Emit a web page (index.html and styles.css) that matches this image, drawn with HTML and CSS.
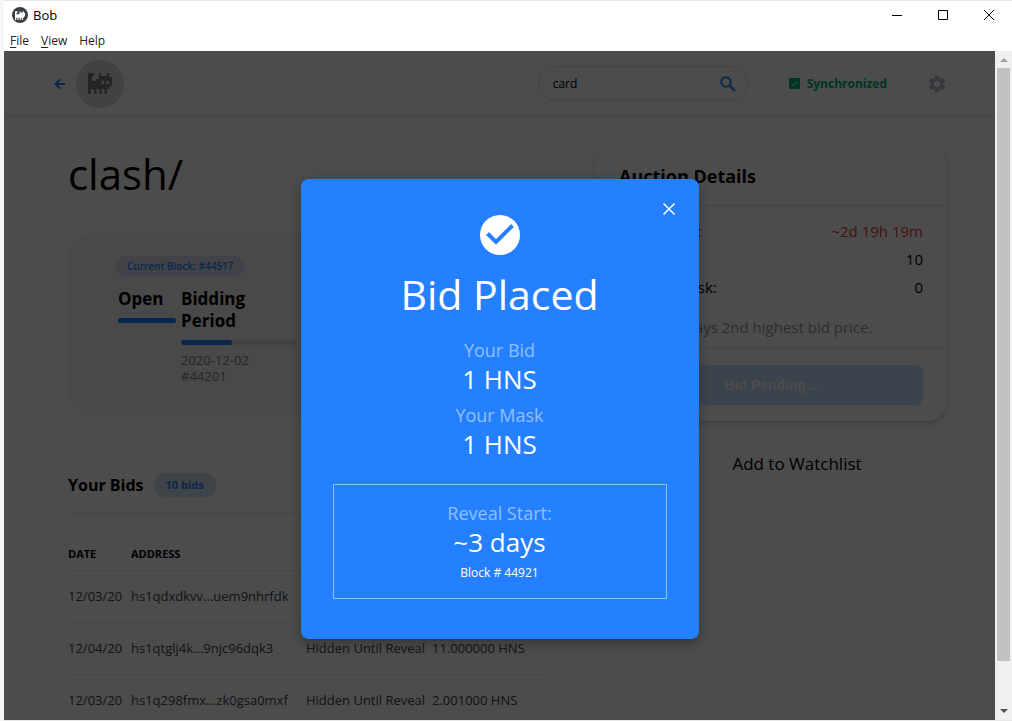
FILE: index.html
```html
<!DOCTYPE html>
<html lang="en">
<head>
<meta charset="utf-8">
<title>Bob</title>
<link rel="stylesheet" href="styles.css">
</head>
<body>
<svg class="defs" aria-hidden="true">
  <symbol id="cat" viewBox="0 0 24 21">
    <path d="M0 0h6v3H4v5h4V6h3V0h2v3h6V0h2.500v4H24v9h-2.500v3H19v5h-2.500v-5H14v5h-2.500v-5H8.500v5H6v-5H3v5H0z"/>
    <path class="eyes" d="M13.500 8h2.500v3h-2.500zM18.500 8H21v3h-2.500z"/>
  </symbol>
</svg>
<div class="window">
  <div class="titlebar">
    <span class="app-icon"><svg width="10" height="9"><use href="#cat"/></svg></span>
    <span class="app-name">Bob</span>
    <div class="window-controls">
      <button aria-label="Minimize"><svg width="10" height="10"><path d="M0 5.500h10"/></svg></button>
      <button aria-label="Maximize"><svg width="10" height="10"><path d="M.5.5h9v9h-9z"/></svg></button>
      <button aria-label="Close"><svg width="10" height="10"><path d="M0 0l10 10M10 0L0 10"/></svg></button>
    </div>
  </div>
  <nav class="menubar">
    <button><u>F</u>ile</button><button><u>V</u>iew</button><button>Help</button>
  </nav>
  <div class="viewport">
    <div class="page">
      <header class="topbar">
        <button class="back" aria-label="Back"><svg width="12" height="12" viewBox="0 0 12 12"><path d="M11 6H2M6 1.500L1.500 6 6 10.500"/></svg></button>
        <span class="logo"><svg width="24" height="21"><use href="#cat"/></svg></span>
        <div class="search">
          <input type="text" value="card" aria-label="Search names">
          <button aria-label="Search"><svg width="16" height="16" viewBox="0 0 16 16"><circle cx="6" cy="6" r="4.700"/><path d="M9.500 9.500L15 15"/></svg></button>
        </div>
        <div class="sync"><svg width="11" height="11" viewBox="0 0 11 11"><rect width="11" height="11" rx="1"/><path d="M2.500 5.500l2.200 2.200L8.700 3.500"/></svg>Synchronized</div>
        <button class="settings" aria-label="Settings"><svg width="20" height="20" viewBox="0 0 24 24"><path d="M19.430 12.980c.04-.32.07-.64.07-.98s-.03-.66-.07-.98l2.110-1.650c.19-.15.24-.42.12-.64l-2-3.460c-.12-.22-.39-.3-.61-.22l-2.490 1c-.52-.4-1.080-.73-1.690-.98l-.38-2.650A.49.49 0 0 0 14 2h-4c-.25 0-.46.18-.49.42l-.38 2.650c-.61.25-1.170.59-1.690.98l-2.490-1c-.23-.09-.49 0-.61.22l-2 3.460c-.13.22-.07.49.12.64l2.110 1.650c-.04.32-.07.65-.07.98s.03.66.07.98l-2.110 1.650c-.19.15-.24.42-.12.64l2 3.460c.12.22.39.3.61.22l2.490-1c.52.4 1.080.73 1.690.98l.38 2.650c.03.24.24.42.49.42h4c.25 0 .46-.18.49-.42l.38-2.650c.61-.25 1.170-.59 1.690-.98l2.490 1c.23.09.49 0 .61-.22l2-3.460c.12-.22.07-.49-.12-.64zM12 15.500a3.500 3.500 0 1 1 0-7 3.500 3.500 0 0 1 0 7z"/></svg></button>
      </header>
      <main class="content">
        <section class="left">
          <h1>clash/</h1>
          <div class="timeline">
            <span class="block-badge">Current Block: #44517</span>
            <div class="stages">
              <div class="stage stage-open"><h3>Open</h3><div class="bar full"></div></div>
              <div class="stage"><h3>Bidding Period</h3><div class="bar"><i style="width:44%"></i></div><p>2020-12-02<br>#44201</p></div>
              <div class="stage"><h3>Reveal</h3><div class="bar"></div><p>2020-12-05<br>#44921</p></div>
            </div>
          </div>
          <div class="bids-head"><h2>Your Bids</h2><span class="count">10 bids</span></div>
          <table class="bids">
            <colgroup><col class="c-date"><col class="c-address"><col class="c-bid"><col></colgroup>
            <thead><tr><th>DATE</th><th>ADDRESS</th><th>BID</th><th></th></tr></thead>
            <tbody>
              <tr><td>12/03/20</td><td>hs1qdxdkvv...uem9nhrfdk</td><td>Hidden Until Reveal</td><td>1.000000 HNS</td></tr>
              <tr><td>12/04/20</td><td>hs1qtglj4k...9njc96dqk3</td><td>Hidden Until Reveal</td><td>11.000000 HNS</td></tr>
              <tr><td>12/03/20</td><td>hs1q298fmx...zk0gsa0mxf</td><td>Hidden Until Reveal</td><td>2.001000 HNS</td></tr>
            </tbody>
          </table>
        </section>
        <aside class="right">
          <div class="auction">
            <h2>Auction Details</h2>
            <div class="details">
              <div class="row"><span>Reveal Due:</span><span class="red">~2d 19h 19m</span></div>
              <div class="row"><span>Total Bids:</span><span>10</span></div>
              <div class="row"><span>Highest Mask:</span><span>0</span></div>
              <p>* Winner pays 2nd highest bid price.</p>
            </div>
            <div class="action"><button disabled>Bid Pending...</button></div>
          </div>
          <button class="watch"><svg width="20" height="20" viewBox="0 0 20 20"><path d="M10 0l3 7h7l-5.500 5 2 8L10 15.500 3.500 20l2-8L0 7h7z"/></svg>Add to Watchlist</button>
        </aside>
      </main>
    </div>
    <div class="overlay">
      <div class="modal" role="dialog" aria-labelledby="modal-title">
        <button class="close" aria-label="Close"><svg width="12" height="12" viewBox="0 0 12 12"><path d="M.5.5l11 11M11.500.5l-11 11"/></svg></button>
        <svg class="check" width="40" height="40" viewBox="0 0 40 40"><circle cx="20" cy="20" r="20"/><path d="M7.500 18.500l8.500 8.500L32.500 10.500"/></svg>
        <h2 id="modal-title">Bid Placed</h2>
        <div class="label">Your Bid</div><div class="value">1 HNS</div>
        <div class="label">Your Mask</div><div class="value">1 HNS</div>
        <div class="reveal"><div class="label">Reveal Start:</div><div class="value">~3 days</div><div class="block">Block # 44921</div></div>
      </div>
    </div>
    <div class="scrollbar" aria-hidden="true"><span class="arrow up"></span><span class="thumb"></span><span class="arrow down"></span></div>
  </div>
</div>
</body>
</html>
```
FILE: styles.css
```css
* { box-sizing: border-box; }
body { margin: 0; background: #f5f6fa; color: #000; font-family: "Open Sans", "Noto Sans", sans-serif; font-size: 13px; }
h1, h2, h3, p { margin: 0; }
button { border: 0; padding: 0; background: none; font: inherit; color: inherit; }
svg { display: block; fill: none; }
.defs { position: absolute; width: 0; height: 0; }

.window { height: 100vh; margin-left: 4px; border-top: 1px solid #e8e8e8; border-bottom: 1px solid #e8e8e8; background: #fff; display: flex; flex-direction: column; }
.titlebar { display: flex; align-items: center; height: 28px; flex: none; padding-left: 8px; gap: 5px; }
.app-icon { width: 16px; height: 16px; border-radius: 50%; background: #394046; color: #fff; display: grid; place-items: center; }
.app-icon svg { fill: currentColor; }
.window-controls { margin-left: auto; display: flex; }
.window-controls button { width: 46px; height: 28px; display: grid; place-items: center; }
.window-controls svg { stroke: #000; }
.menubar { display: flex; gap: 12px; height: 22px; flex: none; padding-left: 6px; font-size: 12px; line-height: 24px; color: #222; }
.menubar u { text-underline-offset: 2px; }

.viewport { position: relative; flex: 1; min-height: 0; display: grid; grid-template-columns: minmax(0, 1fr) 17px; overflow: hidden; }
.page { min-height: 0; overflow: hidden; grid-area: 1 / 1; }
.topbar { display: flex; align-items: center; height: 66px; border-bottom: 1px solid #e0e0e0; padding: 0 48px 0 50px; }
.back svg { stroke: #2480ff; stroke-width: 2; }
.logo { margin-left: 10px; width: 48px; height: 48px; border-radius: 50%; background: #dedede; color: #7a7a7a; display: grid; place-items: center; }
.logo svg { fill: currentColor; }
.eyes { fill: #dedede; }
.search { margin-left: auto; width: 210px; height: 35px; border: 1px solid #e2e2e4; border-radius: 18px; display: flex; align-items: center; padding: 0 11px 0 14px; }
.search input { flex: 1; min-width: 0; border: 0; padding: 0; outline: 0; background: none; font: inherit; font-size: 12px; color: #000; }
.search svg { stroke: #2480ff; stroke-width: 2; }
.sync { display: flex; align-items: center; gap: 7px; margin-left: 41px; font-size: 12px; font-weight: 700; color: #00b26e; }
.sync rect { fill: #00b26e; }
.sync path { stroke: #fff; }
.settings { margin-left: 40px; }
.settings svg { fill: #bcbcc8; }

.content { display: grid; grid-template-columns: minmax(0, 1fr) 352px; gap: 48px; padding: 31px 48px 0 64px; align-items: start; }
h1 { font-size: 42px; font-weight: 400; line-height: 52px; }
.timeline { margin-top: 32px; height: 185px; border-radius: 28px; background: #f3f3f3; padding: 24px 48px; }
.block-badge { display: inline-block; height: 20px; padding: 0 11px; border-radius: 10px; background: #d9e2f5; color: #2480ff; font-size: 10px; font-weight: 600; line-height: 20px; }
.stages { display: grid; grid-template-columns: 58px 115px 1fr; gap: 5px; padding-left: 2px; margin-top: 12px; }
.stage h3 { font-size: 17px; line-height: 22px; margin-bottom: 8px; }
.bar { height: 5px; border-radius: 2px; background: #e0e0e0; overflow: hidden; }
.bar i { display: block; height: 100%; border-radius: 2px; background: #2480ff; }
.bar.full { background: #2480ff; }
.stage p { margin-top: 7px; font-size: 13px; line-height: 16px; color: #808080; }
.bids-head { display: flex; align-items: center; gap: 10px; margin-top: 40px; height: 57px; border-bottom: 1px solid #e0e0e0; }
.bids-head h2 { font-size: 16px; }
.count { height: 24px; padding: 0 12px; border-radius: 10px; background: #d3e3f0; color: #2480ff; font-size: 11px; font-weight: 700; line-height: 24px; }
.bids { width: 100%; table-layout: fixed; border-collapse: collapse; margin-top: 23px; white-space: nowrap; }
.c-date { width: 63px; }
.c-address { width: 175px; }
.c-bid { width: 126px; }
.bids th, .bids td { padding: 0; text-align: left; border-bottom: 1px solid #ececec; }
.bids th { height: 33px; font-size: 11px; }
.bids td { height: 52px; color: #444; font-size: 13px; }

.auction { border-radius: 20px; box-shadow: 0 2px 6px rgba(0, 0, 0, .2); font-size: 15px; }
.auction h2 { font-size: 18px; line-height: 57px; padding: 0 24px; border-bottom: 1px solid #e0e0e0; }
.details { padding: 11px 24px 7px; border-bottom: 1px solid #e0e0e0; }
.row { display: flex; justify-content: space-between; line-height: 28px; }
.red { color: #e8403a; }
.details p { margin-top: 12px; line-height: 28px; color: #999; white-space: nowrap; }
.action { padding: 16px 24px; }
.action button { width: 100%; height: 40px; border-radius: 8px; background: #c5dfff; color: #fff; font: bold 14px "Liberation Sans", Arial, sans-serif; }
.watch { display: flex; align-items: center; gap: 32px; margin: 31px auto 0; font-size: 17px; }
.watch svg { fill: #808080; }

.overlay { grid-area: 1 / 1; z-index: 1; background: rgba(0, 0, 0, .7); display: flex; align-items: center; justify-content: center; padding-top: 46px; }
.modal { position: relative; width: 398px; padding: 36px 32px 40px; border-radius: 8px; background: #2480ff; color: #fff; box-shadow: 0 4px 12px rgba(0, 0, 0, .3); text-align: center; }
.close { position: absolute; top: 24px; right: 24px; }
.close svg { stroke: #fff; stroke-width: 1.5; }
.check { margin: 0 auto; fill: #fff; }
.check path { fill: none; stroke: #2480ff; stroke-width: 4; }
.modal h2 { font-size: 41px; font-weight: 400; line-height: 56px; margin: 11px 0 16px; }
.label { color: rgba(255, 255, 255, .5); font-size: 18px; line-height: 24px; }
.value { font-size: 26px; line-height: 34px; margin-bottom: 7px; }
.reveal { margin-top: 23px; padding: 16px 0; border: 1px solid rgba(255, 255, 255, .5); }
.reveal .value { margin: 0; }
.block { margin-top: 5px; font-size: 12px; line-height: 18px; }

.scrollbar { background: #f0f0f0; display: flex; flex-direction: column; align-items: center; padding: 7px 2px; }
.thumb { width: 13px; flex: 1; margin: 6px 0 48px; background: #c1c1c1; }
.arrow { border: 4px solid transparent; border-top: 0; border-bottom-color: #a3a3a3; }
.down { border-top: 4px solid #505050; border-bottom: 0; }
```
